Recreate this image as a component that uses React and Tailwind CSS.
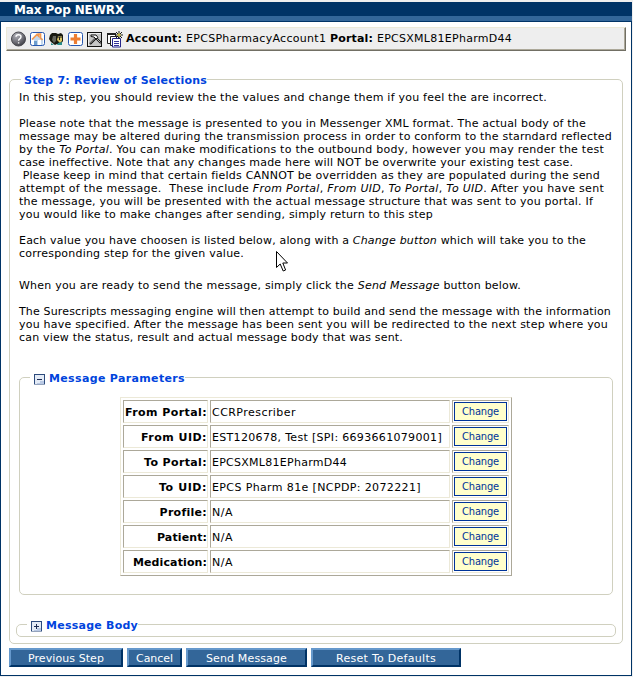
import { useLayoutEffect, useRef, useState } from "react";

// One line of text whose tracking is adjusted so that it fills `w` pixels.
function Fit({ w, className = "", children }) {
  const ref = useRef(null);
  const [ls, setLs] = useState(0);
  useLayoutEffect(() => {
    const el = ref.current;
    const n = el.textContent.length;
    setLs((w - el.getBoundingClientRect().width) / n);
  }, [w]);
  return (
    <span ref={ref} className={`inline-block whitespace-pre ${className}`} style={{ letterSpacing: ls }}>
      {children}
    </span>
  );
}

function Line({ w, className = "", children }) {
  return (
    <div className={`h-[13px] leading-[13px] ${className}`}>
      <Fit w={w}>{children}</Fit>
    </div>
  );
}

function Toolbar() {
  return (
    <svg width="114" height="18" viewBox="0 0 114 18">
      <defs>
        <radialGradient id="ball" cx="35%" cy="25%" r="80%">
          <stop offset="0" stopColor="#b0b0b8" />
          <stop offset="0.6" stopColor="#707078" />
          <stop offset="1" stopColor="#3c3c42" />
        </radialGradient>
      </defs>
      <circle cx="8.5" cy="9" r="7" fill="url(#ball)" stroke="#4a4a50" />
      <path d="M6 6.8Q6.200 4.800 8.500 4.800Q11 4.800 11 6.800Q11 8 9.700 8.800Q8.600 9.500 8.600 10.800M8.600 12.200V13.600" fill="none" stroke="#fff" strokeWidth="1.4" />
      <rect x="20.500" y="2.500" width="14" height="13" rx="2" fill="#fff" stroke="#2858b0" />
      <path d="M22 10L27.500 4L33 9V15H24V10Z" fill="#c3d8ee" />
      <path d="M22 9.500L27 4.500L28.500 6V4H30.500V8L32.500 10" fill="none" stroke="#f2984f" strokeWidth="1.700" />
      <path d="M28 10h3v5h-3z" fill="#fff" />
      <path d="M24 11h3v4h-3z" fill="#6d9dce" />
      <path d="M40 5L42 3H46L48 4L51 3L53 5V11L51 14H47L45 15L41 12L39 9Z" fill="#18180f" />
      <path d="M43 6h3v5l-2 2-2-3z" fill="#62635a" />
      <path d="M48 6h4v5l-2 2-3-3z" fill="#d9c464" />
      <path d="M47 7h5M49.500 7v3" stroke="#202020" fill="none" />
      <path d="M41 13l3 2h-3zM48 13l4-1v3h-5z" fill="#278b8b" />
      <rect x="58.500" y="2.500" width="14" height="13" rx="2" fill="#fff" stroke="#2858b0" />
      <path d="M65.500 4v10M60.500 9h10" stroke="#ed7d31" strokeWidth="3.200" />
      <rect x="77.500" y="2.500" width="14" height="14" fill="#c6c6c6" stroke="#111" />
      <path d="M78.500 15.500V3.500H91" fill="none" stroke="#eee" />
      <path d="M80 14L86 8M86 8L91 13" stroke="#111" strokeWidth="2.200" />
      <path d="M80 13.500L86 7.500M86 8L90.500 12.500" stroke="#ddd" strokeWidth="0.800" />
      <path d="M81 5H86L88 7.500L86 9L84 7L81 6.500Z" fill="#fff" stroke="#111" />
      <path d="M97.500 3.500h8v10h-8z" fill="#fff" stroke="#222" />
      <path d="M97 4h9" stroke="#222" strokeWidth="2" />
      <path d="M100.500 6.500h8v9h-8z" fill="#fff" stroke="#222" />
      <path d="M102.500 8.500h8v8.500h-8z" fill="#fff" stroke="#25258a" />
      <path d="M104 11.500h5M104 13.500h5M104 15.500h5" stroke="#333399" />
      <path d="M109 1v8M105 5h8M106 2l6 6M112 2l-6 6" stroke="#171717" />
      <path d="M109 3.200v3.600M107.200 5h3.600" stroke="#f4e84a" />
    </svg>
  );
}

function Legend({ w, sign, children, className = "" }) {
  return (
    <legend className={`flex h-[14px] items-center leading-[14px] font-bold text-[#0044dd] ${className}`}>
      {sign && (
        <svg width="11" height="11" viewBox="0 0 11 11" className="mr-[4px] shrink-0 translate-y-[1.5px]" shapeRendering="crispEdges">
          <rect x="0.5" y="0.5" width="10" height="10" fill="#e4ebf6" stroke="#2c4a7c" />
          <path d="M6 7H10V10H3V9H6Z" fill="#b9c9e4" />
          <path d={sign === "plus" ? "M3 5.500H8M5.500 3V8" : "M3 5.500H8"} stroke="#1c2c54" fill="none" />
        </svg>
      )}
      <Fit w={w} className="translate-y-[2px]">{children}</Fit>
    </legend>
  );
}

const rows = [
  ["From Portal:", 82, "CCRPrescriber", 84],
  ["From UID:", 66, "EST120678, Test [SPI: 6693661079001]", 230],
  ["To Portal:", 63, "EPCSXML81EPharmD44", 135],
  ["To UID:", 48, "EPCS Pharm 81e [NCPDP: 2072221]", 209],
  ["Profile:", 47, "N/A", 21],
  ["Patient:", 50, "N/A", 21],
  ["Medication:", 74, "N/A", 21],
];

const cell = "border border-t-[#aca899] border-l-[#aca899] border-r-[#ece9d8] border-b-[#ece9d8]";

function Row({ row }) {
  const [label, lw, value, vw] = row;
  return (
    <div className="grid h-[23px] grid-cols-[85px_240px_57px] gap-[2px]">
      <div className={`${cell} flex items-center justify-end pt-[3px] font-bold`}>
        <Fit w={lw}>{label}</Fit>
      </div>
      <div className={`${cell} flex items-center pt-[4px] pl-[1px]`}>
        <Fit w={vw}>{value}</Fit>
      </div>
      <div className={`${cell} p-[1px]`}>
        <button className="flex h-[19px] w-[53px] items-center justify-center border border-[#003399] bg-[#ffffcc] font-['DejaVu_Sans_Condensed','DejaVu_Sans',sans-serif] text-[11px] leading-none font-stretch-condensed text-[#003399]">
          <Fit w={37}>Change</Fit>
        </button>
      </div>
    </div>
  );
}

function NavButton({ w, className, children }) {
  return (
    <button
      className={`flex h-[19px] items-center justify-center border-2 border-t-[#6699cc] border-r-[#003366] border-b-[#003366] border-l-[#6699cc] bg-[#336699] pt-px leading-none text-white ${className}`}
    >
      <Fit w={w}>{children}</Fit>
    </button>
  );
}

export default function App() {
  return (
    <div className="relative h-[677px] w-[633px] overflow-hidden bg-[#efefef] pt-[2px] font-['DejaVu_Sans',Verdana,sans-serif] text-[11px] text-black">
      <div className="h-[674px] w-[632px] border border-t-0 border-[#003366] bg-white">
        <header className="-mx-px h-[20px] border-b border-[#003366] bg-[#003366]">
          <div className="flex h-[14px] items-center pt-px pl-[14px] text-[12px] leading-none font-bold text-white">
            <Fit w={110}>Max Pop NEWRX</Fit>
          </div>
          <div className="h-[5px] bg-[#336699]" />
        </header>
        <div className="mt-[5px] ml-[5px] h-[24px] w-[620px] border-t border-r border-b border-l border-t-[#ece9d8] border-r-[#716f64] border-b-[#716f64] border-l-[#ece9d8]">
          <div className="flex h-[22px] items-center border-r border-b border-[#aca899] bg-[#eeeeee] pl-[3px]">
            <Toolbar />
            <div className="ml-[2px] flex pt-[2px]">
              <Fit w={60} className="font-bold">Account: </Fit>
              <Fit w={144}>EPCSPharmacyAccount1 </Fit>
              <Fit w={47} className="font-bold">Portal: </Fit>
              <Fit w={135}>EPCSXML81EPharmD44</Fit>
            </div>
          </div>
        </div>

        <fieldset className="mt-[21px] ml-[8px] h-[572px] w-[614px] rounded-[5px] border border-[#d0d0bf] pl-[9px]">
          <Legend w={183} className="ml-[2px] pl-[3px]">Step 7: Review of Selections</Legend>
          <div className="mt-[5px]">
            <Line w={528}>In this step, you should review the the values and change them if you feel the are incorrect.</Line>
            <Line w={567} className="mt-[13px]">Please note that the message is presented to you in Messenger XML format. The actual body of the</Line>
            <Line w={593}>message may be altered during the transmission process in order to conform to the starndard reflected</Line>
            <Line w={585}>by the <i>To Portal</i>. You can make modifications to the outbound body, however you may render the test</Line>
            <Line w={554}>case ineffective. Note that any changes made here will NOT be overwrite your existing test case.</Line>
            <Line w={581}> Please keep in mind that certain fields CANNOT be overridden as they are populated during the send</Line>
            <Line w={585}>attempt of the message.  These include <i>From Portal</i>, <i>From UID</i>, <i>To Portal</i>, <i>To UID</i>. After you have sent</Line>
            <Line w={574}>the message, you will be presented with the actual message structure that was sent to you portal. If</Line>
            <Line w={414}>you would like to make changes after sending, simply return to this step</Line>
            <Line w={567} className="mt-[13px]">Each value you have choosen is listed below, along with a <i>Change button</i> which will take you to the</Line>
            <Line w={225}>corresponding step for the given value.</Line>
            <Line w={502} className="mt-[19px]">When you are ready to send the message, simply click the <i>Send Message</i> button below.</Line>
            <Line w={592} className="mt-[13px]">The Surescripts messaging engine will then attempt to build and send the message with the information</Line>
            <Line w={589}>you have specified. After the message has been sent you will be redirected to the next step where you</Line>
            <Line w={384}>can view the status, result and actual message body that was sent.</Line>
          </div>

          <fieldset className="mt-[26px] h-[225px] w-[594px] rounded-[5px] border border-[#d0d0bf]">
            <Legend w={136} sign="minus" className="ml-[10px] pl-[4px]">Message Parameters</Legend>
            <div className="mt-[13px] ml-[100px] flex h-[179px] w-[392px] flex-col gap-[2px] border border-t-[#ece9d8] border-r-[#aca899] border-b-[#aca899] border-l-[#ece9d8] p-[2px]">
              {rows.map((r) => (
                <Row key={r[0]} row={r} />
              ))}
            </div>
          </fieldset>

          <fieldset className="mt-[22px] ml-[-3px] h-[20px] w-[600px] rounded-[5px] border border-[#d0d0bf]">
            <Legend w={92} sign="plus" className="ml-[10px] pl-[4px]">Message Body</Legend>
          </fieldset>
        </fieldset>

        <div className="mt-[4px] ml-[8px] flex">
          <NavButton w={76} className="w-[114px]">Previous Step</NavButton>
          <NavButton w={37} className="ml-[4px] w-[55px]">Cancel</NavButton>
          <NavButton w={81} className="ml-[4px] w-[121px]">Send Message</NavButton>
          <NavButton w={100} className="ml-[4px] w-[150px]">Reset To Defaults</NavButton>
        </div>
      </div>

      <svg className="absolute top-[250px] left-[276px]" width="13" height="23" viewBox="0 0 13 23">
        <path d="M0.500 1.500V17.500L4.200 14L7.200 21L9.600 20L6.800 13H11.500Z" fill="#fff" stroke="#000" />
      </svg>
    </div>
  );
}
